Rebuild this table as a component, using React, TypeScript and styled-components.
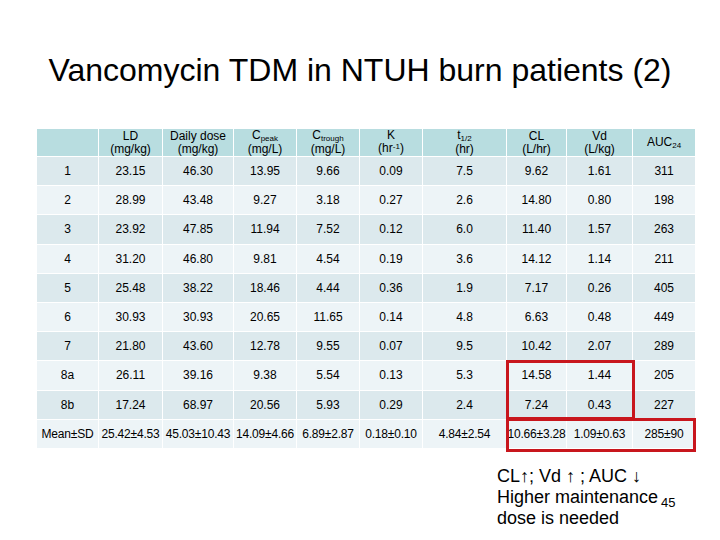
import styled, { createGlobalStyle } from "styled-components";

const GlobalStyle = createGlobalStyle`
  html, body {
    margin: 0;
    padding: 0;
    background: #ffffff;
  }
  body {
    font-family: "Liberation Sans", Arial, sans-serif;
    color: #000000;
  }
`;

const widths = [61, 63, 70, 62, 62, 62, 83, 59, 65, 62];

type Row = string[];

const rows: Row[] = [
  ["1", "23.15", "46.30", "13.95", "9.66", "0.09", "7.5", "9.62", "1.61", "311"],
  ["2", "28.99", "43.48", "9.27", "3.18", "0.27", "2.6", "14.80", "0.80", "198"],
  ["3", "23.92", "47.85", "11.94", "7.52", "0.12", "6.0", "11.40", "1.57", "263"],
  ["4", "31.20", "46.80", "9.81", "4.54", "0.19", "3.6", "14.12", "1.14", "211"],
  ["5", "25.48", "38.22", "18.46", "4.44", "0.36", "1.9", "7.17", "0.26", "405"],
  ["6", "30.93", "30.93", "20.65", "11.65", "0.14", "4.8", "6.63", "0.48", "449"],
  ["7", "21.80", "43.60", "12.78", "9.55", "0.07", "9.5", "10.42", "2.07", "289"],
  ["8a", "26.11", "39.16", "9.38", "5.54", "0.13", "5.3", "14.58", "1.44", "205"],
  ["8b", "17.24", "68.97", "20.56", "5.93", "0.29", "2.4", "7.24", "0.43", "227"],
  ["Mean±SD", "25.42±4.53", "45.03±10.43", "14.09±4.66", "6.89±2.87", "0.18±0.10", "4.84±2.54", "10.66±3.28", "1.09±0.63", "285±90"],
];

const Slide = styled.div`
  width: 720px;
  height: 540px;
  overflow: hidden;
  display: flex;
  flex-direction: column;
`;

const Title = styled.h1`
  margin: 51px 0 0;
  font-size: 32px;
  line-height: 38px;
  font-weight: normal;
  text-align: center;
`;

const TableWrap = styled.div`
  position: relative;
  margin: 40px 0 0 37px;
  width: 658px;
`;

const Grid = styled.div`
  display: grid;
  grid-template-columns: ${widths.map((w) => `${w}px`).join(" ")};
  grid-template-rows: 27px;
  grid-auto-rows: 28.2px;
  gap: 1px;
  background: #ffffff;
`;

const HeadCell = styled.div`
  background: #b8dde0;
  display: flex;
  flex-direction: column;
  align-items: center;
  justify-content: center;
  font-size: 12px;
  line-height: 13px;
  text-align: center;
  white-space: nowrap;
`;

const Sub = styled.span`
  font-size: 8px;
  position: relative;
  top: 2px;
`;

const Sup = styled.span`
  font-size: 8px;
  position: relative;
  top: -3px;
`;

const Cell = styled.div<{ $odd: boolean }>`
  background: ${(p) => (p.$odd ? "#dce9ed" : "#edf4f7")};
  display: flex;
  align-items: center;
  justify-content: center;
  font-size: 12px;
  white-space: nowrap;
`;

const MeanCell = styled(Cell)`
  letter-spacing: -0.2px;
`;

const Highlight = styled.div<{ $left: number; $top: number; $w: number; $h: number }>`
  position: absolute;
  left: ${(p) => p.$left}px;
  top: ${(p) => p.$top}px;
  width: ${(p) => p.$w}px;
  height: ${(p) => p.$h}px;
  border: 3px solid #c8161d;
  box-sizing: border-box;
  pointer-events: none;
`;

const Note = styled.div`
  margin: 18px 0 0 497px;
  font-size: 18px;
  line-height: 21px;
  white-space: nowrap;
`;

const Line = styled.div`
  height: 21px;
`;

const PageNum = styled.span`
  font-size: 13px;
  margin-left: 3px;
  position: relative;
  top: 4px;
  line-height: 0;
`;

const App = () => {
  return (
    <>
      <GlobalStyle />
      <Slide>
        <Title>Vancomycin TDM in NTUH burn patients (2)</Title>
        <TableWrap>
          <Grid>
            <HeadCell />
            <HeadCell>
              <span>LD</span>
              <span>(mg/kg)</span>
            </HeadCell>
            <HeadCell>
              <span>Daily dose</span>
              <span>(mg/kg)</span>
            </HeadCell>
            <HeadCell>
              <span>
                C<Sub>peak</Sub>
              </span>
              <span>(mg/L)</span>
            </HeadCell>
            <HeadCell>
              <span>
                C<Sub>trough</Sub>
              </span>
              <span>(mg/L)</span>
            </HeadCell>
            <HeadCell>
              <span>K</span>
              <span>
                (hr<Sup>-1</Sup>)
              </span>
            </HeadCell>
            <HeadCell>
              <span>
                t<Sub>1/2</Sub>
              </span>
              <span>(hr)</span>
            </HeadCell>
            <HeadCell>
              <span>CL</span>
              <span>(L/hr)</span>
            </HeadCell>
            <HeadCell>
              <span>Vd</span>
              <span>(L/kg)</span>
            </HeadCell>
            <HeadCell>
              <span>
                AUC<Sub>24</Sub>
              </span>
            </HeadCell>
            {rows.map((row, r) =>
              row.map((v, c) =>
                r === rows.length - 1 ? (
                  <MeanCell key={`${r}-${c}`} $odd={r % 2 === 0}>
                    {v}
                  </MeanCell>
                ) : (
                  <Cell key={`${r}-${c}`} $odd={r % 2 === 0}>
                    {v}
                  </Cell>
                )
              )
            )}
          </Grid>
          <Highlight $left={469} $top={231} $w={129} $h={60} />
          <Highlight $left={469} $top={289} $w={190} $h={34} />
        </TableWrap>
        <Note>
          <Line>CL↑; Vd ↑ ; AUC ↓</Line>
          <Line>
            Higher maintenance<PageNum>45</PageNum>
          </Line>
          <Line>dose is needed</Line>
        </Note>
      </Slide>
    </>
  );
};

export default App;
